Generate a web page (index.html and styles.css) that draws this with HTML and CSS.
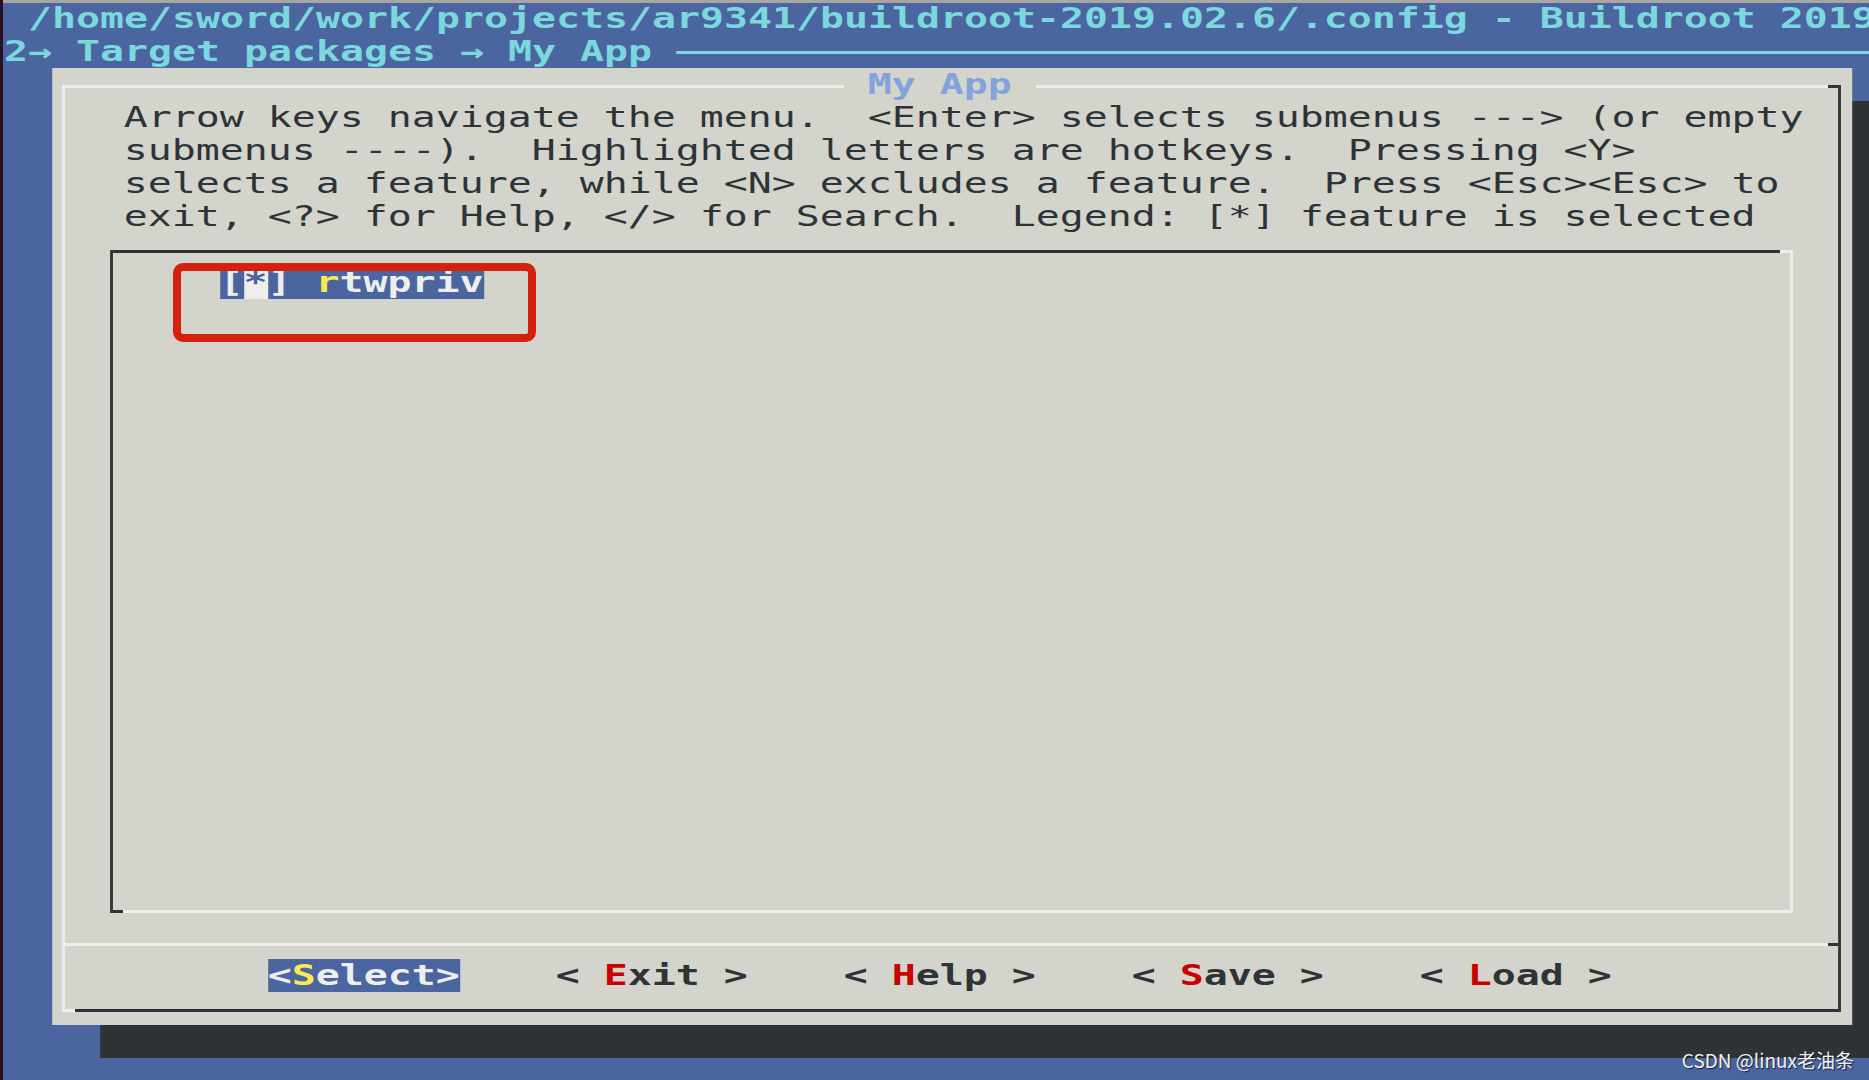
FILE: index.html
```html
<!DOCTYPE html>
<html lang="en">
<head>
    <meta charset="UTF-8" />
    <meta name="viewport" content="width=device-width, initial-scale=1.0"/>
    <title>Buildroot menuconfig - My App</title>
    <link rel="stylesheet" href="styles.css">
</head>
<body>
    <div class="screen">
        <div class="backtitle"> /home/sword/work/projects/ar9341/buildroot-2019.02.6/.config - Buildroot 2019</div>
        <div class="breadcrumb">
            <span class="crumbs">2→ Target packages → My App </span>
            <span class="crumb-line"></span>
        </div>

        <div class="dialog">
            <div class="frame">
                <div class="frame-head">
                    <span class="head-line left"></span>
                    <span class="dialog-title"> My App </span>
                    <span class="head-line right"></span>
                </div>

                <div class="prompt">
                    <div class="prompt-line">Arrow keys navigate the menu.  &lt;Enter&gt; selects submenus ---&gt; (or empty</div>
                    <div class="prompt-line">submenus ----).  Highlighted letters are hotkeys.  Pressing &lt;Y&gt;</div>
                    <div class="prompt-line">selects a feature, while &lt;N&gt; excludes a feature.  Press &lt;Esc&gt;&lt;Esc&gt; to</div>
                    <div class="prompt-line">exit, &lt;?&gt; for Help, &lt;/&gt; for Search.  Legend: [*] feature is selected</div>
                </div>

                <div class="menu-box">
                    <div class="menu-row"><span class="menu-item selected">[<span class="cursor">*</span>] <span class="hotkey">r</span>twpriv</span></div>
                </div>

                <div class="separator"></div>

                <div class="buttons">
                    <span class="button active">&lt;<span class="hotkey">S</span>elect&gt;</span>
                    <span class="button">&lt; <span class="hotkey">E</span>xit &gt;</span>
                    <span class="button">&lt; <span class="hotkey">H</span>elp &gt;</span>
                    <span class="button">&lt; <span class="hotkey">S</span>ave &gt;</span>
                    <span class="button">&lt; <span class="hotkey">L</span>oad &gt;</span>
                </div>
            </div>
        </div>
    </div>

    <div class="annotation"></div>
    <div class="watermark">CSDN @linux老油条</div>
</body>
</html>
```

FILE: styles.css
```css
/* terminal cell: 24px wide, 33px tall; glyphs are stretched sideways */
html, body {
    margin: 0;
    height: 100%;
    overflow: hidden;
}

body {
    position: relative;
    background-color: #4b65a0;
    box-shadow: inset 3px 0 0 #2a1027, inset 0 3px 0 #a9a5a0;
}

.screen {
    width: 1324px;
    height: 1080px;
    box-sizing: border-box;
    padding: 2px 0 0 2.83px;
    transform: scaleX(1.41176);
    transform-origin: 0 0;
    font-family: "DejaVu Sans Mono", monospace;
    font-size: 28.24px;
    line-height: 33px;
}

.backtitle {
    height: 33px;
    white-space: pre;
    overflow: hidden;
    color: #7bd8dc;
    font-weight: bold;
}

.breadcrumb {
    display: flex;
    height: 33px;
    color: #7bd8dc;
    font-weight: bold;
}

.crumbs {
    white-space: pre;
}

.crumb-line {
    flex: 1;
    height: 3px;
    margin-top: 16px;
    background-color: #7bd8dc;
}

.dialog {
    display: flex;
    flex-direction: column;
    margin-left: 2ch;
    width: 75ch;
    height: 957px;
    box-sizing: border-box;
    padding: 17px calc(0.5ch - 1.0625px) 13px;
    background-color: #d3d4cc;
    box-shadow: 2ch 33px 0 #2e3436;
    color: #2e3436;
}

.frame {
    flex: 1;
    display: flex;
    flex-direction: column;
    border-left: 2.125px solid #eeeeec;
    border-right: 2.125px solid #2e3436;
    padding-bottom: 3px;
    background: linear-gradient(90deg, #eeeeec calc(0.5ch - 1.0625px), #2e3436 0) bottom / 100% 3px no-repeat;
}

.frame-head {
    display: flex;
    height: 33px;
    margin-top: -17px;
}

.head-line {
    height: 3px;
    margin-top: 17px;
}

.head-line.left {
    width: calc(32.5ch - 1.0625px);
    background-color: #eeeeec;
}

.head-line.right {
    flex: 1;
    background: linear-gradient(90deg, #eeeeec calc(100% - 0.5ch + 1.0625px), #2e3436 0);
}

.dialog-title {
    white-space: pre;
    color: #84a2db;
    font-weight: bold;
}

.prompt {
    padding-left: calc(2.5ch - 1.0625px);
}

.prompt-line {
    height: 33px;
    white-space: pre;
}

.menu-box {
    margin: 17px 0 0 calc(2ch - 2.125px);
    width: calc(70ch + 2.125px);
    height: 663px;
    box-sizing: border-box;
    border-left: 2.125px solid #2e3436;
    border-right: 2.125px solid #eeeeec;
    padding: 16px 0 3px calc(4.5ch - 1.0625px);
    background:
        linear-gradient(90deg, #2e3436 calc(100% - 0.5ch + 1.0625px), #eeeeec 0) top / 100% 3px no-repeat,
        linear-gradient(90deg, #2e3436 calc(0.5ch - 1.0625px), #eeeeec 0) bottom / 100% 3px no-repeat;
}

.menu-row {
    height: 33px;
}

.menu-item {
    white-space: pre;
}

.menu-item.selected {
    background-color: #4b65a0;
    color: #eeeeec;
    font-weight: bold;
}

.menu-item .cursor {
    background-color: #eeeeec;
    color: #4b65a0;
}

.menu-item .hotkey {
    color: #fce94f;
}

.separator {
    margin-top: 30px;
    height: 3px;
    background: linear-gradient(90deg, #eeeeec calc(100% - 0.5ch + 1.0625px), #2e3436 0);
}

.buttons {
    display: flex;
    gap: 4ch;
    margin-top: 13px;
    height: 33px;
    padding-left: calc(8.5ch - 1.0625px);
    font-weight: bold;
}

.button {
    white-space: pre;
}

.button .hotkey {
    color: #cc0000;
}

.button.active {
    background-color: #4b65a0;
    color: #eeeeec;
}

.button.active .hotkey {
    color: #fce94f;
}

/* red marker drawn over the screenshot */
.annotation {
    position: absolute;
    left: 173px;
    top: 263px;
    width: 363px;
    height: 79px;
    box-sizing: border-box;
    border: 8px solid #d4200c;
    border-radius: 10px;
}

.watermark {
    position: absolute;
    right: 15px;
    top: 1049px;
    font-family: "Noto Sans CJK SC", sans-serif;
    font-size: 19px;
    line-height: 22px;
    color: #f2f2f2;
    text-shadow: 1px 1px 1px rgba(0, 0, 0, .7);
}
```
